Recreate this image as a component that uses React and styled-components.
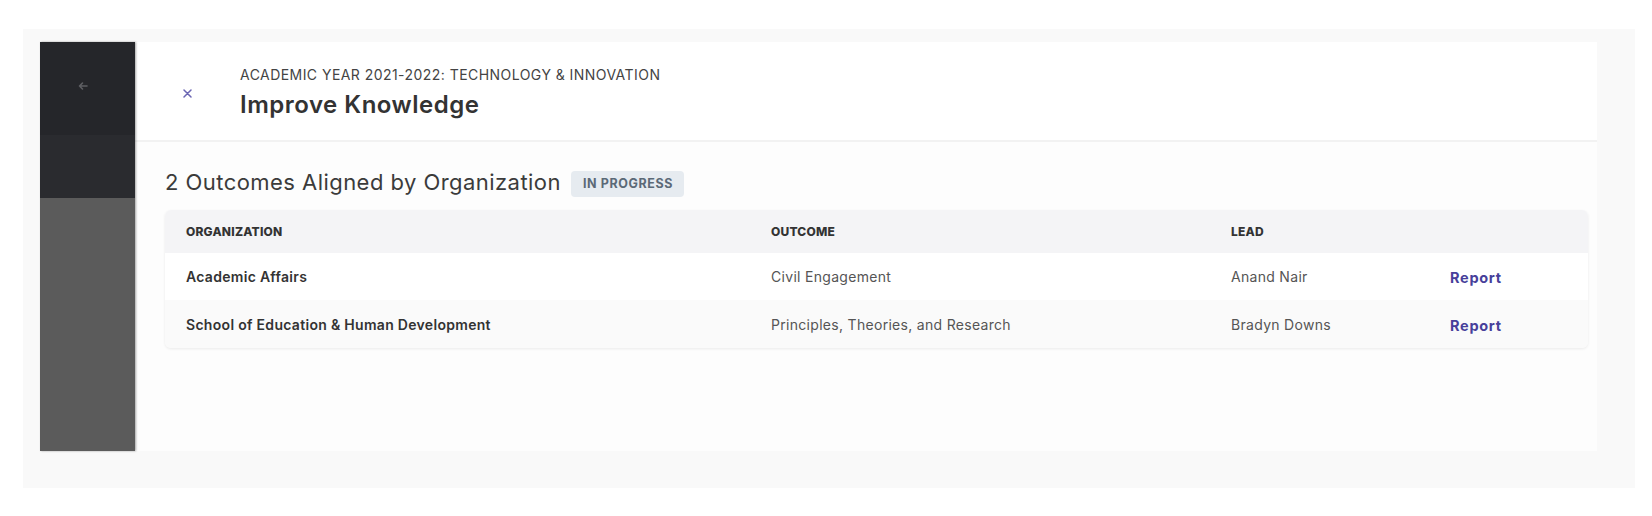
import React from "react";
import styled, { createGlobalStyle } from "styled-components";

const Global = createGlobalStyle`
  html, body { margin: 0; padding: 0; background: #ffffff; }
  body { font-family: Inter, "Noto Sans", "Liberation Sans", sans-serif; -webkit-font-smoothing: antialiased; }
  * { box-sizing: border-box; }
`;

const Frame = styled.div`
  margin: 29px 17px 28px 23px;
  padding: 13px 38px 37px 17px;
  background: #f9f9f9;
  display: flex;
  height: 459px;
`;

const Sidebar = styled.aside`
  width: 95px;
  display: flex;
  flex-direction: column;
  background: #5b5b5b;
  box-shadow: 1px 0 2px rgba(0, 0, 0, 0.35);
  position: relative;
  z-index: 1;
`;

const SideBlock = styled.div`
  height: ${(p) => p.$h}px;
  background: ${(p) => p.$bg};
  display: flex;
  align-items: flex-start;
  justify-content: center;
  padding-top: ${(p) => p.$pt || 0}px;
  padding-right: ${(p) => p.$pr || 0}px;
`;

const Main = styled.main`
  flex: 1;
  display: flex;
  flex-direction: column;
  background: #f2f2f2;
  gap: 2px;
`;

const Header = styled.header`
  height: 98px;
  background: #ffffff;
  display: flex;
  align-items: flex-start;
  padding-top: 25px;
`;

const CloseCol = styled.div`
  width: 105px;
  height: 9px;
  margin-top: 22px;
  display: flex;
  justify-content: center;
  color: #6b66b3;
`;

const Titles = styled.div`
  display: flex;
  flex-direction: column;
  gap: 8px;
`;

const Eyebrow = styled.div`
  font-size: 14px;
  color: #444;
  letter-spacing: 0.45px;
  line-height: 16px;
`;

const Title = styled.h1`
  margin: 0;
  font-size: 24px;
  font-weight: 600;
  color: #333;
  letter-spacing: 0.5px;
  line-height: 28px;
`;

const Body = styled.section`
  flex: 1;
  background: #fdfdfd;
  padding: 28px 9px 0 30px;
`;

const HeadingRow = styled.div`
  display: flex;
  align-items: center;
  gap: 10px;
  height: 25px;
  margin-bottom: 15px;
`;

const Heading = styled.h2`
  margin: 0;
  font-size: 22px;
  font-weight: 400;
  color: #3b3b3b;
  letter-spacing: 0.45px;
  line-height: 25px;
`;

const Badge = styled.span`
  display: inline-flex;
  align-items: center;
  height: 26px;
  margin-top: 2px;
  padding: 0 11px 0 12px;
  border-radius: 4px;
  background: #e6ebf0;
  color: #5b6977;
  font-size: 12.5px;
  font-weight: 700;
  letter-spacing: 0.6px;
`;

const Table = styled.div`
  border-radius: 6px;
  overflow: hidden;
  box-shadow: 0 1px 3px rgba(0, 0, 0, 0.08);
`;

const Row = styled.div`
  display: grid;
  grid-template-columns: 585px 460px 219px 1fr;
  align-items: center;
  padding: 0 20px 0 21px;
  height: ${(p) => p.$h}px;
  background: ${(p) => p.$bg};
`;

const HeadCell = styled.div`
  font-size: 12px;
  font-weight: 800;
  color: #333;
  letter-spacing: 0.2px;
`;

const Cell = styled.div`
  font-size: 14px;
  letter-spacing: 0.3px;
  font-weight: ${(p) => (p.$strong ? 600 : 400)};
  color: ${(p) => (p.$strong ? "#333" : "#555")};
`;

const ReportLink = styled.a`
  font-size: 14.5px;
  font-weight: 700;
  letter-spacing: 0.7px;
  color: #47409a;
  text-decoration: none;
  cursor: pointer;
  padding-top: 2px;
`;

const rows = [
  { org: "Academic Affairs", outcome: "Civil Engagement", lead: "Anand Nair", bg: "#ffffff", h: 47 },
  {
    org: "School of Education & Human Development",
    outcome: "Principles, Theories, and Research",
    lead: "Bradyn Downs",
    bg: "#fafafa",
    h: 48,
  },
];

export default function App() {
  return (
    <>
      <Global />
      <Frame>
        <Sidebar>
          <SideBlock $h={93} $bg="#25262a" $pt={39} $pr={10}>
            <svg width="10" height="10" viewBox="0 0 10 10" fill="none" stroke="#5e5f63" strokeWidth="1.6" strokeLinecap="round" strokeLinejoin="round">
              <path d="M9 5H1.5M4.5 2L1.5 5l3 3" />
            </svg>
          </SideBlock>
          <SideBlock $h={63} $bg="#2a2b2f" />
        </Sidebar>
        <Main>
          <Header>
            <CloseCol>
              <svg width="9" height="9" viewBox="0 0 9 9" fill="none" stroke="currentColor" strokeWidth="1.5" strokeLinecap="round">
                <path d="M1 1l7 7M8 1L1 8" />
              </svg>
            </CloseCol>
            <Titles>
              <Eyebrow>ACADEMIC YEAR 2021-2022: TECHNOLOGY &amp; INNOVATION</Eyebrow>
              <Title>Improve Knowledge</Title>
            </Titles>
          </Header>
          <Body>
            <HeadingRow>
              <Heading>2 Outcomes Aligned by Organization</Heading>
              <Badge>IN PROGRESS</Badge>
            </HeadingRow>
            <Table>
              <Row $h={43} $bg="#f4f4f6">
                <HeadCell>ORGANIZATION</HeadCell>
                <HeadCell>OUTCOME</HeadCell>
                <HeadCell>LEAD</HeadCell>
                <span />
              </Row>
              {rows.map((r) => (
                <Row key={r.org} $h={r.h} $bg={r.bg}>
                  <Cell $strong>{r.org}</Cell>
                  <Cell>{r.outcome}</Cell>
                  <Cell>{r.lead}</Cell>
                  <ReportLink>Report</ReportLink>
                </Row>
              ))}
            </Table>
          </Body>
        </Main>
      </Frame>
    </>
  );
}
